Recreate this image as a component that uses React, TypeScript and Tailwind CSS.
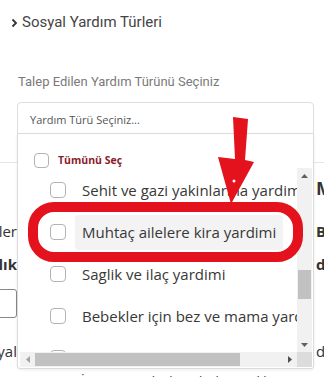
import React from "react"

const items = [
  "Sehit ve gazi yakinlarina yardim",
  "Muhtaç ailelere kira yardimi",
  "Saglik ve ilaç yardimi",
  "Bebekler için bez ve mama yardimi",
  "Engelli bireylere tekerlekli sandalye",
]

function Box() {
  return <span className="block w-[16px] h-[16px] shrink-0 rounded-[4px] border border-[#b3b3b3] bg-white" />
}

function Tri({ dir, color }: { dir: "up" | "down" | "left" | "right"; color: string }) {
  const pts = {
    up: "0,4 7,4 3.5,0",
    down: "0,0 7,0 3.5,4",
    left: "4,0 4,7 0,3.5",
    right: "0,0 0,7 4,3.5",
  }[dir]
  const vertical = dir === "up" || dir === "down"
  return (
    <svg width={vertical ? 7 : 4} height={vertical ? 4 : 7}>
      <polygon points={pts} fill={color} />
    </svg>
  )
}

export default function App() {
  return (
    <div className="relative w-[324px] h-[377px] overflow-hidden bg-white font-['Roboto',sans-serif]">
      {/* Heading */}
      <div className="flex items-center gap-[4px] pl-[11px] pt-[12px] h-[32px] text-[15px] leading-[20px] text-[#444]">
        <svg width="7" height="10" viewBox="0 0 7 10" className="mt-[1px]">
          <path d="M1.5 1.5 L5 5 L1.5 8.5" stroke="#333" strokeWidth="1.8" fill="none" />
        </svg>
        <span>Sosyal Yardım Türleri</span>
      </div>

      {/* Field label */}
      <div className="mt-[41px] pl-[18px] text-[13px] leading-[18px] text-[#7a7a7a]">
        Talep Edilen Yardım Türünü Seçiniz
      </div>

      {/* Select input */}
      <div className="mt-[11px] ml-[17px] mr-[10px] h-[36px] flex items-center pl-[12px] rounded-[4px] border border-[#dedede] text-[11px] text-[#555] font-['Open_Sans',sans-serif]">
        Yardım Türü Seçiniz...
      </div>

      {/* Page content behind the dropdown */}
      <div className="mt-[24px] h-[210px] flex border-t border-[#e6e6e6] text-[#333] font-['Open_Sans',sans-serif]">
        <div className="w-[17px] shrink-0 overflow-hidden flex flex-col items-end text-[15px] leading-[20px] whitespace-nowrap">
          <span className="mt-[58px]">Aileler</span>
          <span className="mt-[13px] font-bold">Sağlık</span>
          <span className="mt-[15px] block w-[60px] h-[29px] shrink-0 rounded-[3px] border border-[#888]" />
          <span className="mt-[23px]">Sosyal</span>
        </div>
        <div className="flex-1" />
        <div className="w-[8px] shrink-0 overflow-hidden flex flex-col text-[15px] leading-[20px] whitespace-nowrap font-bold">
          <span className="mt-[13px] text-[18px] leading-[24px]">Miktar</span>
          <span className="mt-[21px]">Belge</span>
          <span className="mt-[13px]">das</span>
          <span className="mt-[67px] font-normal">dair</span>
        </div>
      </div>
      <div className="pl-[28px] text-[13px] leading-[18px] text-[#333] whitespace-nowrap font-['Open_Sans',sans-serif]">
        Başvuru İçin Tüm Belgeleri Eksiksiz Yükleyiniz
      </div>

      {/* Dropdown panel */}
      <div className="absolute left-[17px] top-[133px] w-[297px] h-[236px] flex flex-col bg-white border border-[#dcdcdc] rounded-b-[3px] shadow-[0_1px_3px_rgba(0,0,0,0.08)] font-['Open_Sans',sans-serif]">
        <div className="flex items-center gap-[9px] pl-[16px] pt-[19px] h-[34px]">
          <span className="block w-[15px] h-[15px] rounded-[4px] border border-[#b3b3b3]" />
          <span className="text-[10.5px] font-bold text-[#8a1c2c]">Tümünü Seç</span>
        </div>
        <div className="ml-[2px] mr-[1px] h-[199px] grid grid-cols-[1fr_15px] grid-rows-[1fr_15px]">
          <div className="overflow-hidden pt-[1px]">
            {items.map((t, i) => (
              <div key={t} className="h-[42px] flex items-center pl-[30px] whitespace-nowrap">
                <Box />
                <span
                  className={`ml-[9px] px-[7px] h-[35px] flex items-center text-[15px] text-[#383838] rounded-[3px] ${
                    i === 1 ? "bg-[#f3f3f3]" : ""
                  }`}
                >
                  {t}
                </span>
              </div>
            ))}
          </div>
          <div className="bg-[#f1f1f1] flex flex-col items-center">
            <div className="h-[15px] flex items-center"><Tri dir="up" color="#606060" /></div>
            <div className="mt-[87px] w-[13px] h-[29px] bg-[#c1c1c1]" />
            <div className="mt-auto h-[15px] flex items-center"><Tri dir="down" color="#606060" /></div>
          </div>
          <div className="bg-[#f1f1f1] flex items-center">
            <div className="w-[15px] flex justify-center"><Tri dir="left" color="#a3a3a3" /></div>
            <div className="h-[13px] w-[205px] bg-[#c1c1c1]" />
            <div className="ml-auto w-[15px] flex justify-center"><Tri dir="right" color="#505050" /></div>
          </div>
          <div className="bg-[#dcdcdc]" />
        </div>
      </div>

      {/* Annotation: red frame */}
      <div className="absolute left-[28px] top-[202px] w-[275px] h-[60px] rounded-[26px] border-[10px] border-[#e3121c]" />

      {/* Annotation: red arrow */}
      <svg className="absolute left-[215px] top-[115px]" width="42" height="92" viewBox="0 0 42 92">
        <polygon points="18,2 33,4 30,45 39,47 16,89 3,42 20,44" fill="#e3121c" />
        <circle cx="19" cy="66" r="1.5" fill="#fff" />
      </svg>
    </div>
  )
}
